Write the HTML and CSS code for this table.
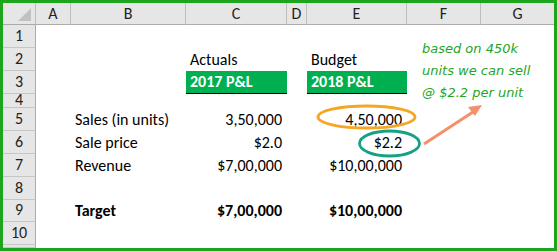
FILE: index.html
```html
<!DOCTYPE html>
<html>
<head>
<meta charset="utf-8">
<link rel="stylesheet" href="styles.css">
</head>
<body>
<div class="frame">
  <div class="sheet">
    <div class="row hdr">
      <div class="corner"><span class="tri"></span></div>
      <div class="ch">A</div><div class="ch">B</div><div class="ch">C</div><div class="ch">D</div><div class="ch">E</div><div class="ch">F</div><div class="ch">G</div>
    </div>
    <div class="row r"><div class="rh">1</div><div></div><div></div><div></div><div></div><div></div><div></div><div></div></div>
    <div class="row r"><div class="rh">2</div><div></div><div></div><div class="c">Actuals</div><div></div><div class="c">Budget</div><div></div><div></div></div>
    <div class="row r"><div class="rh">3</div><div></div><div></div><div class="c fill">2017 P&amp;L</div><div></div><div class="c fill">2018 P&amp;L</div><div></div><div></div></div>
    <div class="row r4"><div class="rh clip">4</div><div></div><div></div><div></div><div></div><div></div><div></div><div></div></div>
    <div class="row r"><div class="rh">5</div><div></div><div class="c">Sales (in units)</div><div class="c num">3,50,000</div><div></div><div class="c num">4,50,000</div><div></div><div></div></div>
    <div class="row r"><div class="rh">6</div><div></div><div class="c">Sale price</div><div class="c num">$2.0</div><div></div><div class="c num">$2.2</div><div></div><div></div></div>
    <div class="row r"><div class="rh">7</div><div></div><div class="c">Revenue</div><div class="c num">$7,00,000</div><div></div><div class="c num">$10,00,000</div><div></div><div></div></div>
    <div class="row r"><div class="rh">8</div><div></div><div></div><div></div><div></div><div></div><div></div><div></div></div>
    <div class="row r9"><div class="rh">9</div><div></div><div class="c b">Target</div><div class="c num b">$7,00,000</div><div></div><div class="c num b">$10,00,000</div><div></div><div></div></div>
    <div class="row r"><div class="rh">10</div><div></div><div></div><div></div><div></div><div></div><div></div><div></div></div>
    <div class="row rest"><div class="rh"></div><div></div><div></div><div></div><div></div><div></div><div></div><div></div></div>

    <div class="note">based on 450k<br>units we can sell<br>@ $2.2 per unit</div>
    <svg class="marks" width="551" height="245" viewBox="0 0 551 245">
      <ellipse cx="363.5" cy="114" rx="48.5" ry="11" fill="none" stroke="#f5a623" stroke-width="2.8"/>
      <ellipse cx="386.5" cy="140.5" rx="30" ry="12.5" fill="none" stroke="#16a085" stroke-width="2.8"/>
      <line x1="421" y1="141" x2="470" y2="109" stroke="#f4906c" stroke-width="3"/>
      <polygon points="479,102 465,104 472,113" fill="#f4906c"/>
    </svg>
  </div>
</div>
</body>
</html>
```

FILE: styles.css
```css
html, body {
  margin: 0;
  padding: 0;
  background: #fff;
}
.frame {
  width: 551px;
  height: 245px;
  border: 3px solid #1ea51e;
  overflow: hidden;
}
.sheet {
  position: relative;
  width: 551px;
  height: 245px;
  display: flex;
  flex-direction: column;
  font-family: "Carlito", "Lato", "Liberation Sans", sans-serif;
  font-size: 16px;
  color: #000;
}
.row {
  display: grid;
  grid-template-columns: 33px 35px 115px 101px 20px 100px 74px 73px;
  flex: none;
}
.hdr { height: 22px; }
.r { height: 23px; }
.r4 { height: 14px; }
.r9 { height: 22px; }
.rest { flex: 1; }
.hdr > div {
  background: #e6e6e6;
  border-right: 1px solid #bdbdbd;
  border-bottom: 1px solid #ababab;
  display: flex;
  align-items: center;
  justify-content: center;
  color: #222;
  box-sizing: border-box;
}
.hdr > .ch:last-child { border-right: none; }
.corner { position: relative; }
.tri {
  position: absolute;
  right: 4px;
  bottom: 3px;
  width: 0;
  height: 0;
  border-left: 13px solid transparent;
  border-bottom: 13px solid #c1c1c1;
}
.rh {
  background: #e6e6e6;
  border-right: 1px solid #ababab;
  border-bottom: 1px solid #c6c6c6;
  box-sizing: border-box;
  display: flex;
  align-items: flex-end;
  justify-content: center;
  color: #222;
  line-height: 20px;
  padding-bottom: 1px;
  overflow: hidden;
}
.rh.clip {
  align-items: flex-start;
  line-height: 10px;
  padding-top: 1px;
}
.c {
  display: flex;
  align-items: flex-end;
  padding: 0 4px 1px 4px;
  line-height: 20px;
  white-space: nowrap;
  box-sizing: border-box;
}
.num { justify-content: flex-end; padding-right: 5px; }
.b { font-weight: bold; }
.fill {
  background: #00b050;
  color: #fff;
  font-weight: bold;
  border-bottom: 1px solid #000;
}
.note {
  position: absolute;
  left: 419px;
  top: 35px;
  font-family: "DejaVu Sans", sans-serif;
  font-style: italic;
  font-size: 13px;
  line-height: 22px;
  color: #25a525;
  white-space: nowrap;
}
.marks {
  position: absolute;
  left: 0;
  top: 0;
  pointer-events: none;
}
```
